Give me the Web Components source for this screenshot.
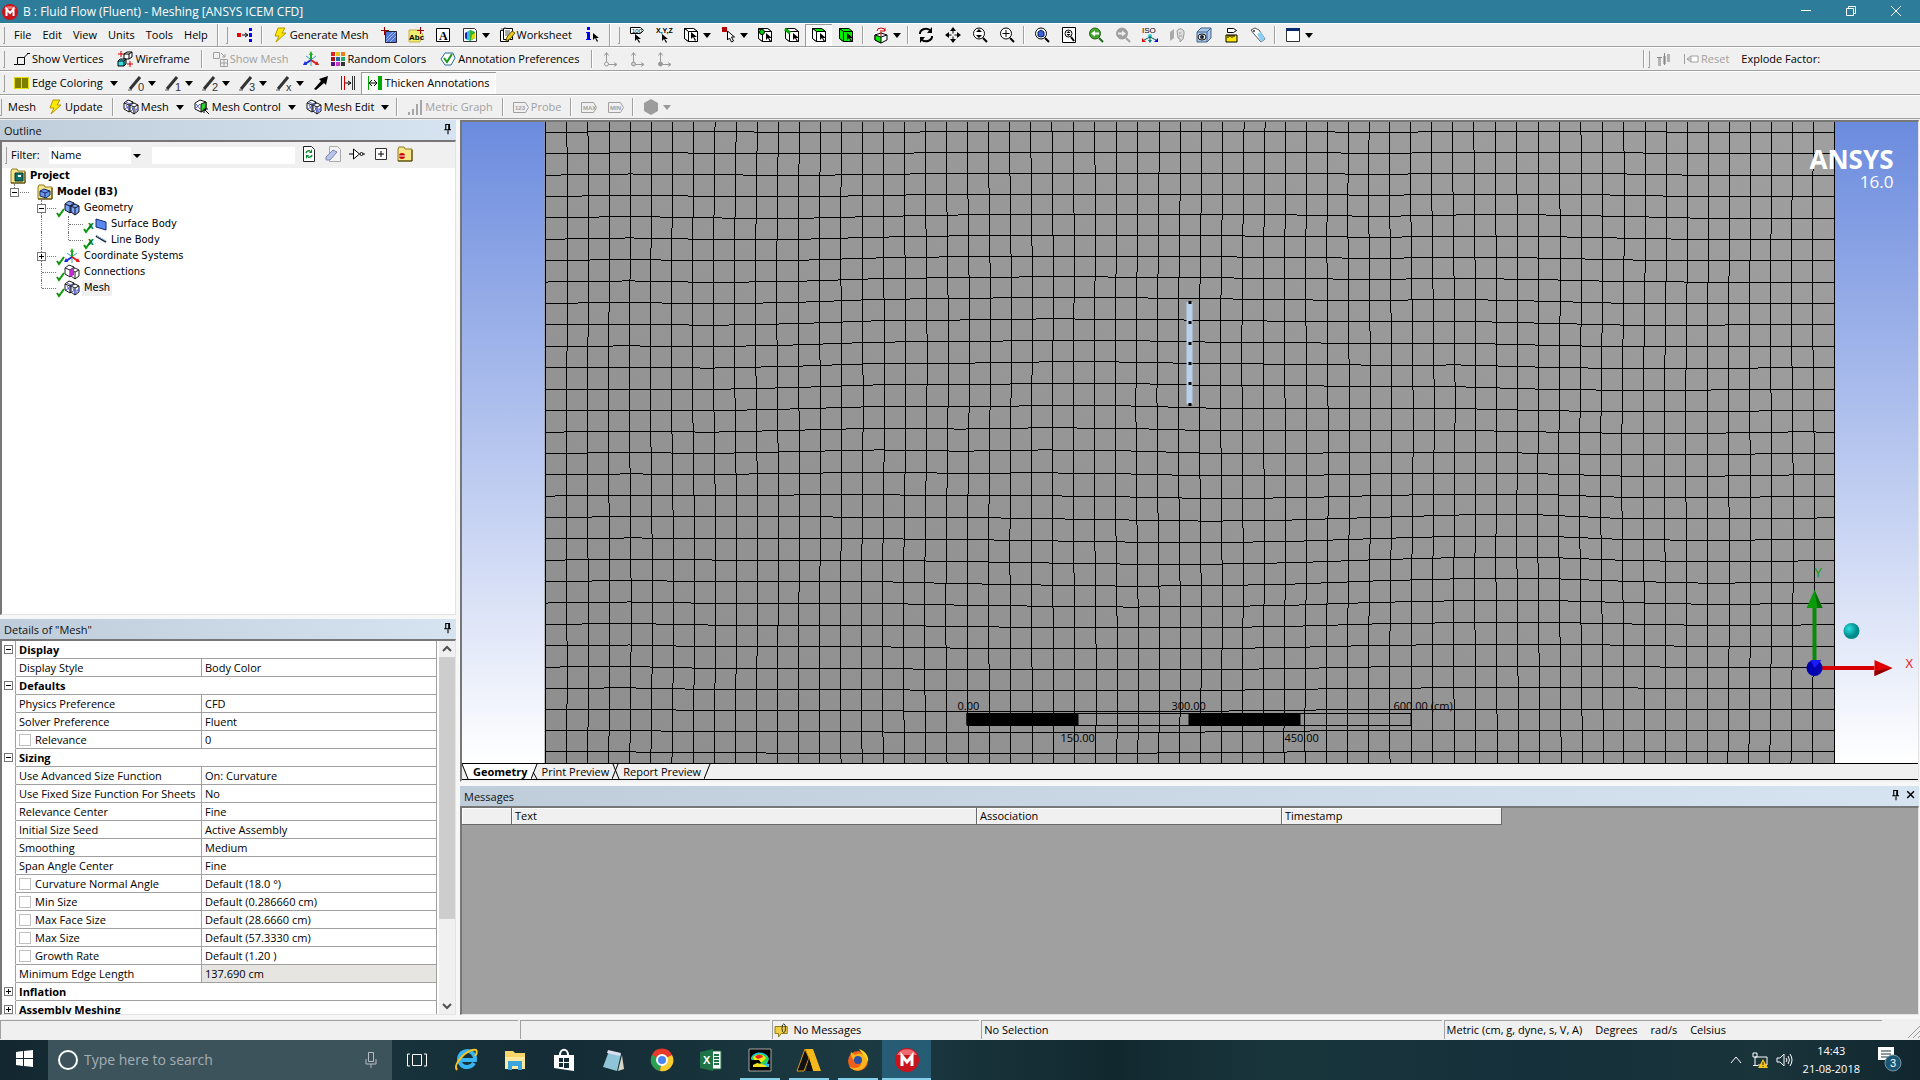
<!DOCTYPE html>
<html lang="en">
<head>
<meta charset="utf-8">
<title>B : Fluid Flow (Fluent) - Meshing [ANSYS ICEM CFD]</title>
<style>
    html, body { height: 100%; }
    body {
        margin: 0;
        overflow: hidden;
        font: 11px/16px "Open Sans", "Noto Sans", sans-serif;
        color: #000;
        background: #f7f7f7;
    }
</style>
</head>
<body>
<mesh-app></mesh-app>

<script>
// ---------- icons, all drawn on a 16x16 grid ----------
const cursor = (x, y, c = '#000') => `<path d="M${x} ${y}v7l2-2 2 4 1-1-2-3h3z" fill="${c}"/>`;
const box = (top, front, side) => `<g stroke="#000" stroke-linejoin="round"><path d="M1.5 1.5h9l4 3v10h-9l-4-3z" fill="#fff"/><path d="M1.5 1.5h9l4 3h-9z" fill="${top}"/><path d="M5.5 4.5h9v10h-9z" fill="${front}"/><path d="M1.5 1.5l4 3v10l-4-3z" fill="${side}"/></g>`;
const cubes = (fill, line) => `<g fill="${fill}" stroke="${line}" stroke-width="1"><path d="M1 4l4-3 5 2v7l-4 3-5-3z"/><path d="M1 4l5 2 4-3M6 6v7"/><path d="M7 6l4-2 4 2v6l-4 3-4-3z"/><path d="M7 6l4 2 4-2M11 8v7"/></g>`;
const meshLines = '<path d="M3 3l6 3M3 6l3 5M2 10l4-3M9 8l2 6M8 12l3-3M12 10l3 1M12 13l3-5" stroke="#5a66d8" stroke-width="1" fill="none"/>';
const lens = (inner, c = '#000', fill = '#fff') => `<circle cx="7" cy="6.5" r="5.5" fill="${fill}" stroke="${c}"/><path d="M11 11l4 4" stroke="${c}" stroke-width="2"/>${inner}`;
const diag = ch => `<path d="M2 14L12 2" stroke="#333" stroke-width="3"/><path d="M0 15h4" stroke="#555"/><text x="10" y="16" font-size="11" font-family="Liberation Sans" fill="#333">${ch}</text>`;
const badge = (t, c) => `<path d="M.5 3.5h12l3 5-3 5H.5z" fill="none" stroke="${c}"/><text x="2" y="11" font-size="6" font-weight="700" font-family="Liberation Sans" fill="${c}">${t}</text>`;
const folder = '<path d="M1 3l1-2h5l1 2h7v12H1z" fill="#f6e58b" stroke="#8b7a1c"/><path d="M1 15h14V4" fill="none" stroke="#4a4210"/>';
const axes = (a, b, c) => `<path d="M8 9V2" stroke="${a}" stroke-width="2"/><path d="M8 0l2 4H6z" fill="${a}"/><path d="M8 9l-6 4" stroke="${b}" stroke-width="2"/><path d="M0 14l2-4 2 4z" fill="${b}"/><path d="M8 9l6 4" stroke="${c}" stroke-width="2"/><path d="M16 14l-4 0 2-4z" fill="${c}"/>`;
const grayAxis = extra => `<path d="M4.5 12V2M2.5 4.5l2-3 2 3M5 13.5h9M12 11.5l3 2-3 2" stroke="#999" fill="none"/><circle cx="4.5" cy="13" r="2" fill="${extra}" stroke="#999"/>`;

const ICONS = {
    meshing: '<circle cx="8" cy="8" r="8" fill="#c8141c"/><path d="M2 5a7 6 0 0 1 12 0z" fill="#ee7378"/><path d="M4.5 12V5L8 9l3.5-4v7" fill="none" stroke="#fff" stroke-width="2"/>',
    route: '<rect x="0" y="6" width="4" height="4" fill="#e00"/><path d="M5 8h5M8 6l3 2-3 2" stroke="#000" fill="none"/><path d="M12 1h3v3h-3zM12 6h3v4h-3zM12 12h3v3h-3z" fill="#00f"/>',
    bolt: '<path d="M6 1h7l-3 5h4L4 15l3-6H3z" fill="#ffe800" stroke="#b49a00"/>',
    plane: '<path d="M4.5 4.5h11v11h-11z" fill="#5277d9" stroke="#223"/><path d="M5 12l7-7M5 15L15 5M9 15l6-6" stroke="#9db6f5"/><path d="M3.5 0v8M0 3.5h8" stroke="#900"/>',
    abc: '<path d="M1 3h11l3 5-3 7H1z" fill="#f3ec70" stroke="#c0b540"/><text x="1" y="13" font-size="8" font-weight="700" font-family="Liberation Sans">Abc</text><path d="M12.5 0v7M9 3.5h7" stroke="#900"/>',
    letter: '<path d="M1.5 1.5h13v13h-13z" fill="#fff" stroke="#000"/><text x="4" y="13" font-size="12" font-family="Liberation Serif" font-weight="700">A</text>',
    chart: '<path d="M1.5 1.5h11l2 2v11h-13z" fill="#fff" stroke="#333"/><path d="M3 6l5-3 5 2v6l-5 3-5-2z" fill="#27c4d8"/><path d="M8 3l5 2v6l-5 3z" fill="#37b036"/><path d="M10 8l3-2v5l-4 2z" fill="#e8d40c"/><path d="M3 6l2-1v7l-2-1z" fill="#22c"/>',
    sheet: '<path d="M1.5 3.5h8v11h-8z" fill="#fff" stroke="#000"/><path d="M4.5 1.5h9v11h-9z" fill="#fff" stroke="#000"/><path d="M6 4h5M6 6h5M6 8h5M3 1v3M6 0v2" stroke="#555"/><path d="M7 14l1-4 5-6 3 2-5 6z" fill="#e9cc1b" stroke="#6b5a00"/>',
    info: '<rect x="3" y="0" width="3" height="3" fill="#00f"/><path d="M2 5h4v7h1v1H2v-1h1V6H2z" fill="#00f"/>' + cursor(9, 6),
    tag100: '<path d="M1.5.5h10l3 3-3 3h-10z" fill="#fff" stroke="#000"/><text x="3" y="6" font-size="6" font-family="Liberation Sans">100</text>' + cursor(6, 7),
    xyz: '<text x="0" y="6" font-size="7" font-weight="700" font-family="Liberation Sans">X,Y,Z</text>' + cursor(6, 7),
    cubeSel: box('#fff', '#fff', '#fff') + cursor(8, 5),
    vertexSel: '<rect x="2" y="0" width="5" height="5" fill="#b00000"/><path d="M7.5 4v9l2-2 2 4 2-1-2-4h3z" fill="#fff" stroke="#000"/>',
    cubeV: box('#fff', '#fff', '#fff') + '<circle cx="5" cy="5" r="2.5" fill="#0d0" stroke="#000"/>' + cursor(9, 6),
    cubeE: box('#fff', '#fff', '#fff') + '<path d="M1 2l5 4" stroke="#0a0" stroke-width="3"/>' + cursor(9, 6),
    cubeF: box('#0e0', '#fff', '#fff') + cursor(9, 6),
    cubeB: box('#0e0', '#0e0', '#0e0') + cursor(9, 6),
    rotCube: '<path d="M2 8l6-2 6 2v5l-6 3-6-3z" fill="#fff" stroke="#000"/><path d="M2 8l6 2v6l-6-3z" fill="#0e0" stroke="#000"/><path d="M8 10l6-2" stroke="#000"/><path d="M4 4a4 3 0 0 1 8 0M12 1v3H9M8 3v6" stroke="#c00" fill="none"/>',
    rotate: '<path d="M2 7a6 5 0 0 1 10-4M14 9a6 5 0 0 1-10 4" fill="none" stroke="#000" stroke-width="2"/><path d="M14 0v6H9zM2 16v-6h5z"/>',
    pan: '<path d="M8 2v12M2 8h12" stroke="#000"/><path d="M8 0l3 4H5zM8 16l3-4H5zM0 8l4-3v6zM16 8l-4-3v6z"/><path d="M6.500 6.500h3v3h-3z" fill="#f0f0f0"/>',
    zoom: lens('<path d="M7 2l3 3H4zM7 11l3-3H4z"/>'),
    zoomIn: lens('<path d="M7 3v7M3.5 6.5h7" stroke="#000"/>'),
    zoomBox: lens('<path d="M4 5l3-2 3 2v4l-3 1-3-1z" fill="#3b60d0" stroke="#001a70"/>'),
    fit: '<path d="M1.5.5h13v15h-13z" fill="#fff" stroke="#000"/><circle cx="7.5" cy="6.5" r="3.5" fill="none" stroke="#000"/><path d="M10 10l3 4" stroke="#000" stroke-width="2"/><path d="M7.5 4l2 2h-4zM7.5 9l2-2h-4z"/>',
    zPrev: lens('<path d="M3 6.5l4-3v2h4v2H7v2z" fill="#fff"/>', '#226618', '#43a62a'),
    zNext: lens('<path d="M11 6.5l-4-3v2H3v2h4v2z" fill="#eee"/>', '#a0a0a0', '#a0a0a0'),
    iso: '<text x="0" y="6" font-size="8" font-family="Liberation Sans">ISO</text><circle cx="8" cy="9" r="2" fill="#3cc"/><path d="M8 9v5M8 10l-6 3M8 10l6 3" stroke="#066"/><path d="M0 11v4h4z" fill="#e00"/><path d="M16 11v4h-4z" fill="#00d"/><path d="M6 13h4l-2 3z" fill="#0a7a7a"/>',
    face: '<path d="M1 5l4-3v9l-4 3z" fill="#aaa"/><path d="M8 4c2-4 8-2 7 3l-1 5-3 3v-3l-2-1z" fill="#ddd" stroke="#999"/><path d="M10 6h2M10 9h3" stroke="#999"/>',
    eye: '<path d="M1 5l4-4h10v10l-4 4H1z" fill="#a9c6ea" stroke="#46638c"/><path d="M1 5h10l4-4M11 5v10" fill="none" stroke="#46638c"/><ellipse cx="6" cy="10" rx="4" ry="3" fill="#fff" stroke="#111"/><circle cx="6" cy="10" r="2" fill="#123"/>',
    ruler: '<path d="M4.5 1.5h6l3 2-3 2h-6z" fill="#fff" stroke="#000"/><path d="M3 8h11v7H3z" fill="#ffe600" stroke="#000"/><path d="M5 8v3M7 8v2M9 8v3M11 8v2" stroke="#000"/>',
    tags: '<path d="M1 3l4-2 4 2 6 9-4 3-7-8z" fill="#fff" stroke="#555"/><path d="M7 7l4-2 4 7-4 3z" fill="#8cd0f2"/><circle cx="4" cy="4" r="1" fill="#333"/>',
    window: '<path d="M1.5 1.5h13v13h-13z" fill="#fff" stroke="#333"/><path d="M1 1h14v3H1z" fill="#0a2a70"/>',
    vertices: '<path d="M3.5 6.5h7v7h-7zM9.5 7l4-4M0 13.5h3M13 2.5h3" fill="none" stroke="#000"/>',
    wire: '<g fill="#fff" stroke="#000"><path d="M7 3l3-2h5v5l-3 2H7z"/><path d="M7 3h5v5M12 3l3-2" fill="none"/></g><g fill="#37e0e0" stroke="#000"><path d="M1 10l2-2h6v5l-2 2H1z"/><path d="M1 10h6v5M7 10l2-2" fill="none"/></g><path d="M4 0v6M1 3h6M13 10v6M10 13h6" stroke="#c00"/>',
    showMesh: '<path d="M1.5 1.5h6v6h-6zM8.5 8.5h7v7h-7zM12 8v7M8 12h7M9 2l4 4M13 3v3h-3" stroke="#a0a0a0" fill="none"/>',
    axes: axes('#1fae1f', '#1a2ae0', '#e01a1a') + '<path d="M3 5l4 3M13 5L9 8M8 10v5" stroke="#36a5b8"/>',
    colors: '<path d="M1 1h4v4H1z" fill="#d22"/><path d="M6 1h4v4H6z" fill="#e8c31c"/><path d="M11 1h4v4h-4z" fill="#e87e1c"/><path d="M1 6h4v4H1z" fill="#a11"/><path d="M6 6h4v4H6z" fill="#26a"/><path d="M11 6h4v4h-4z" fill="#2a6"/><path d="M1 11h4v4H1z" fill="#518"/><path d="M6 11h4v4H6z" fill="#c3c"/><path d="M11 11h4v4h-4z" fill="#333"/>',
    annot: '<path d="M1 8l4-6h8l2 5-4 7H5z" fill="#fff" stroke="#2a6a9c"/><path d="M4 7l3 4 5-8" fill="none" stroke="#1a9a1a" stroke-width="2"/>',
    ax1: grayAxis('#f0f0f0'), ax2: grayAxis('#ccc'), ax3: grayAxis('#999'),
    edgeColor: '<path d="M0 2h7v12H0zM8 2h7v12H8z" fill="#7d7d00"/><path d="M.5 2.5h14v11H.5zM7.5 2v12" fill="none" stroke="#e8e000"/>',
    d0: diag('0'), d1: diag('1'), d2: diag('2'), d3: diag('3'), dx: diag('x'),
    bigArrow: '<path d="M15 1L13 10 11 8 3 15 1 14 8 6 6 4z"/>',
    gapArrow: '<path d="M1.5 1v14M4.5 1v14" stroke="#c00"/><path d="M5 8h6M8 6l3 2-3 2" stroke="#000" fill="none"/><path d="M12.5 1v14M14.5 1v14" stroke="#333"/>',
    thicken: '<path d="M1.5 1v14" stroke="#0a0"/><path d="M2 8h8M5 5L2 8l3 3M7 5l3 3-3 3" stroke="#000" fill="none"/><path d="M11 1h4v14h-4z" fill="#0a0"/>',
    mesh: cubes('#fff', '#111') + meshLines,
    meshCtl: '<path d="M1 4l5-3 6 2v7l-5 3-6-3z" fill="#fff" stroke="#111"/><path d="M2 5l4 5M6 5l-4 4" stroke="#5a66d8"/><path d="M7 5l5-2v7l-5 3z" fill="#2bd02b" stroke="#111"/><path d="M15 15l-5-5M10 14v-4h4" stroke="#000" fill="none"/>',
    graph: '<path d="M1 13h2v3H1zM5 10h2v6H5zM9 5h2v11H9zM13 1h2v15h-2z" fill="#a6a6a6"/>',
    probe: badge('123', '#a0a0a0'), max: badge('MAX', '#a0a0a0'), min: badge('MIN', '#a0a0a0'),
    hex: '<path d="M8 0l7 4v8l-7 4-7-4V4z" fill="#9c9c9c"/>',
    explode: '<path d="M2 7h3v8H2zM7 5h3v8H7zM11 3h3v8h-3z" fill="#b4b4b4"/><path d="M1 6.5h5M8.5 2v12" stroke="#888"/>',
    reset: '<path d="M1.5 3v10M4 8h11M8 5L4 8l4 3" stroke="#a0a0a0" fill="none"/><path d="M8 5h7v6H8z" fill="#fff" stroke="#a0a0a0"/>',
    refresh: '<path d="M2.5.5h8l3 3v12h-11z" fill="#fff" stroke="#222"/><path d="M5 7a3 3 0 0 1 4-2M11 9a3 3 0 0 1-4 2" fill="none" stroke="#0a8a2a" stroke-width="1.500"/><path d="M11 3v4H8zM5 13V9h3z" fill="#0a8a2a"/>',
    eraser: '<path d="M4.5.5h8l3 3v12h-11z" fill="#f3f3f3" stroke="#aaa"/><path d="M1 11l7-7 4 2-7 8-4 0z" fill="#b9c3e6" stroke="#7c87b8"/>',
    gate: '<path d="M0 8h4M4.5 3v10l6-5zM14 8h2" fill="#fff" stroke="#000"/><circle cx="12.5" cy="8" r="1.5" fill="#fff" stroke="#000"/>',
    plusBox: '<path d="M2.5 2.5h11v11h-11z" fill="#fff" stroke="#333"/><path d="M5 8h6M8 5v6" stroke="#000"/>',
    folderRed: folder + '<circle cx="5" cy="10" r="3" fill="#c00"/><path d="M2 10h6" stroke="#fff"/>',
    project: folder + '<path d="M5 5h8v8H5z" fill="#0c7468" stroke="#033"/><path d="M8 7h3v2H8z" fill="#fff"/>',
    model: folder + '<path d="M3 7l4-2 6 2v4l-4 3-6-2z" fill="#6e98ee" stroke="#112a6e"/><path d="M3 7l5 2 5-2M8 9v4" stroke="#112a6e" fill="none"/>',
    geometry: cubes('#7aa4f4', '#112'),
    surface: '<path d="M2 3l10 3v8L2 11z" fill="#5a8af0" stroke="#112a6e"/>',
    line: '<path d="M2 4l10 6" stroke="#123" stroke-width="2"/><path d="M3 4l9 5" stroke="#8fb4e8"/>',
    connections: cubes('#fff', '#222') + '<path d="M6 6l4-2v7l-4 2z" fill="#c22bd0"/>',
    pin: '<path d="M5 2h5v7H5zM9 2v7M3 9h9M8 10v5" stroke="#000" stroke-width="1.500" fill="none"/>',
    close: '<path d="M3 3l9 9M12 3l-9 9" stroke="#000" stroke-width="2"/>',
    note: '<path d="M0 4h14v8H7l-3 4v-4H0z" fill="#f0cf45" stroke="#8a7010"/><ellipse cx="10" cy="6" rx="2" ry="5" fill="none" stroke="#222"/>',
    chevUp: '<path d="M3 11l5-6 5 6" stroke="#fff" fill="none"/>',
    net: '<path d="M3 5h12v8H6M1 1h4v4H1zM3 5v8M1 13.5h5" stroke="#fff" fill="none"/><path d="M11 7l5 9H6z" fill="#f8c514"/><path d="M11 10v3M11 14v1" stroke="#222"/>',
    vol: '<path d="M1 6h3l4-4v12l-4-4H1zM10 6q2 2 0 4M12 4q3 4 0 8M14 2q4 6 0 12" stroke="#fff" fill="none"/>',
    check: '<path d="M1 5l2 3 5-7" fill="none" stroke="#0a9a0a" stroke-width="2"/>',
};

// task bar pictures, 24x24
const TASKS = {
    view: '<path d="M7.5 6.5h9v11h-9zM5 6H2.5v12H5M19 6h2.5v12H19" fill="none" stroke="#fff"/>',
    ie: '<path d="M20 15a8 8 0 1 1 1-3H6" fill="none" stroke="#38b5f0" stroke-width="4"/><path d="M3 22C-2 16 14 0 22 2c2 2 0 5-1 6" fill="none" stroke="#f7c325" stroke-width="2"/>',
    files: '<path d="M2 3h8l2 2h10v15H2z" fill="#f9d66a"/><path d="M2 9h20v12H2z" fill="#fde9a0"/><path d="M5 13h14v9h-4v-4H9v4H5z" fill="#3aa4de"/>',
    store: '<path d="M2 7h20v16l-20-3z" fill="#fff"/><path d="M8 7c0-7 8-7 8 0" fill="none" stroke="#fff" stroke-width="2"/><path d="M7 10h4v4H7zM12 10h5v4h-5zM7 15h4v4H7zM12 15h5v5h-5z" fill="#142c36"/>',
    notes: '<path d="M8 3l12 3-4 17-14-4z" fill="#8ec3d8"/><path d="M7 2l13 3-1 3L6 5z" fill="#dde"/><path d="M17 23l4-16 2 14z" fill="#d8d4c6"/>',
    chrome: '<circle cx="12" cy="12" r="11" fill="#e8392b"/><path d="M12 12L2 7a11 11 0 0 0 8 16z" fill="#27a050"/><path d="M12 12l-2 11A11 11 0 0 0 22 7z" fill="#f9cd2e"/><path d="M2 7h20A11 11 0 0 0 2 7z" fill="#e8392b"/><circle cx="12" cy="12" r="5" fill="#4a84f0" stroke="#fff" stroke-width="2"/>',
    excel: '<path d="M13 3h9v18h-9z" fill="#fff" stroke="#1e7446"/><path d="M15 7h5M15 10h5M15 13h5M15 16h5" stroke="#1e7446" stroke-width="2"/><path d="M1 4l13-3v22L1 20z" fill="#1e7446"/><text x="4" y="16" font-size="11" font-weight="700" fill="#fff" font-family="Liberation Sans">X</text>',
    cfd: '<path d="M1 1h22v22H1z" fill="#000" stroke="#aaa"/><path d="M3 10c2-7 16-8 18 1l-2 5h2v3H9l-5-4z" fill="#19c4e8"/><path d="M4 10c2-5 14-6 16 1l-3 5-10 0z" fill="#2fd833"/><path d="M5 10c3-5 11-4 13 0l-4 4H8z" fill="#f5e31e"/><path d="M7 9c2-3 7-3 8 0l-5 2z" fill="#e22"/><path d="M3 12l8 0 2 3-3 2H3z" fill="#000"/><path d="M5 17l4-2 8 2 2 2H5z" fill="#f5e31e"/>',
    ansys: '<path d="M8 1h8l8 22h-8L12 10z" fill="#f5b81c"/><path d="M8 1l4 9-5 13H0z" fill="#111" stroke="#d99a12"/><path d="M12 10l4 13H9l1-5z" fill="#111"/>',
    firefox: '<circle cx="12" cy="13" r="10" fill="#f0601a"/><path d="M5 4l4 3c5-4 13 0 12 7-2 10-14 11-18 4 7 5 14 0 12-6-2-3-6-2-7 0C5 9 4 7 5 4z" fill="#fbb41c"/><circle cx="12" cy="12" r="4" fill="#2a50a8"/><path d="M13 1c7 2 10 8 9 13-2-5-5-7-9-13z" fill="#fdd42c"/>',
    meshing: '<circle cx="12" cy="12" r="12" fill="#c8141c"/><path d="M2 7a11 10 0 0 1 20 0z" fill="#ee6a70"/><path d="M7 18V8l5 6 5-6v10" fill="none" stroke="#fff" stroke-width="3"/>',
};

const define = (name, template, setup) => customElements.define(name, class extends HTMLElement {
    constructor() {
        super();
        this.attachShadow({ mode: 'open' });
    }
    connectedCallback() {
        this.shadowRoot.innerHTML = typeof template === 'function' ? template(this) : template;
        if (setup) setup(this, this.shadowRoot);
    }
});

define('ui-icon', el => {
    const s = el.getAttribute('size') || 16;
    const big = el.hasAttribute('task');
    return `<svg width="${s}" height="${s}" viewBox="${big ? '0 0 24 24' : '0 0 16 16'}" aria-hidden="true">${(big ? TASKS : ICONS)[el.getAttribute('name')] || ''}</svg>
    <style>:host { display: inline-flex; flex: none; } svg { display: block; overflow: visible; }</style>`;
});

define('title-bar', `
    <ui-icon name="meshing"></ui-icon>
    <span><slot></slot></span>
    <button aria-label="Minimize"><svg width="10" height="10"><path d="M0 4.5h10"/></svg></button>
    <button aria-label="Restore"><svg width="10" height="10"><path d="M.5 2.5h7v7h-7zM2.5 2V.5h7v7H8"/></svg></button>
    <button aria-label="Close"><svg width="10" height="10"><path d="M0 0l10 10M10 0L0 10"/></svg></button>
    <style>
        :host { display: flex; align-items: center; height: 23px; padding: 0 2px; background: #2d7c9a; color: #fff; font-size: 12px; }
        span { flex: 1; padding-left: 5px; }
        button { width: 45px; height: 20px; padding: 0; border: 0; background: none; }
        path { fill: none; stroke: #fff; }
    </style>
`);

define('tool-bar', `
    <slot></slot>
    <style>
        :host { display: flex; align-items: center; height: 22px; padding-top: 1px; background: #f0f0f0; border-bottom: 1px solid #a0a0a0; box-shadow: inset 0 1px #fff; white-space: nowrap; }
        :host([roomy]) { --label-end: 8px; }
    </style>
`);

define('tool-grip', `
    <style>
        :host { display: block; width: 2px; height: 17px; margin: 0 3px; border-right: 1px solid #a0a0a0; border-bottom: 1px solid #a0a0a0; box-sizing: border-box; }
        :host([slim]) { margin: 0; }
    </style>
`);

define('tool-sep', `
    <style>
        :host { display: block; width: 1px; height: 18px; margin: 0 3px; background: #a0a0a0; border-right: 1px solid #fff; }
        :host([band]) { height: 22px; margin: 0 4px; }
    </style>
`);

define('tool-button', el => {
    const icon = el.getAttribute('icon');
    return `
    <button class="${icon && el.textContent ? 'both' : ''}" ${el.hasAttribute('disabled') ? 'disabled' : ''} aria-label="${el.textContent || icon}">
        ${icon ? `<ui-icon name="${icon}"></ui-icon>` : ''}
        ${el.textContent ? '<span><slot></slot></span>' : ''}
        ${el.hasAttribute('drop') ? '<i></i>' : ''}
    </button>
    <style>
        :host { display: flex; }
        button { display: flex; align-items: center; height: 22px; padding: 0 5px 0 6px; border: 0; background: none; font: inherit; color: #000; box-sizing: border-box; }
        button.both { padding-right: var(--label-end, 6px); }
        button:disabled { color: #a0a0a0; }
        ui-icon + span { padding-left: 2px; }
        i { margin: 0 -2px 0 4px; border: 4px solid transparent; border-top: 5px solid #000; border-bottom: 0; }
        span + i { margin-left: 7px; }
        button:disabled i { border-top-color: #999; }
        :host([pressed]) button { background: #f9f9f9; box-shadow: inset 1px 1px #999, inset -1px -1px #fff; }
    </style>`;
});

define('app-toolbars', `
    <tool-bar>
        <tool-grip></tool-grip>
        <tool-button>File</tool-button><tool-button>Edit</tool-button><tool-button>View</tool-button>
        <tool-button>Units</tool-button><tool-button>Tools</tool-button><tool-button>Help</tool-button>
        <tool-sep band></tool-sep><tool-grip></tool-grip>
        <tool-button icon="route"></tool-button><tool-sep></tool-sep>
        <tool-button icon="bolt">Generate Mesh</tool-button>
        <tool-button icon="plane"></tool-button><tool-button icon="abc"></tool-button>
        <tool-button icon="letter"></tool-button><tool-button icon="chart" drop></tool-button>
        <tool-button icon="sheet">Worksheet</tool-button>
        <tool-button icon="info"></tool-button>
        <tool-sep band></tool-sep><tool-grip></tool-grip>
        <tool-button icon="tag100"></tool-button><tool-button icon="xyz"></tool-button>
        <tool-button icon="cubeSel" drop></tool-button><tool-button icon="vertexSel" drop></tool-button>
        <tool-button icon="cubeV"></tool-button><tool-button icon="cubeE"></tool-button>
        <tool-button icon="cubeF" pressed></tool-button><tool-button icon="cubeB"></tool-button>
        <tool-sep></tool-sep>
        <tool-button icon="rotCube" drop></tool-button><tool-sep></tool-sep>
        <tool-button icon="rotate"></tool-button><tool-button icon="pan"></tool-button>
        <tool-button icon="zoom"></tool-button><tool-button icon="zoomIn"></tool-button>
        <tool-sep></tool-sep>
        <tool-button icon="zoomBox"></tool-button><tool-button icon="fit"></tool-button>
        <tool-button icon="zPrev"></tool-button><tool-button icon="zNext" disabled></tool-button>
        <tool-button icon="iso"></tool-button><tool-button icon="face" disabled></tool-button>
        <tool-button icon="eye"></tool-button><tool-button icon="ruler"></tool-button>
        <tool-button icon="tags"></tool-button><tool-sep></tool-sep>
        <tool-button icon="window" drop></tool-button>
    </tool-bar>
    <tool-bar roomy>
        <tool-grip></tool-grip>
        <tool-button icon="vertices">Show Vertices</tool-button>
        <tool-button icon="wire">Wireframe</tool-button><tool-sep></tool-sep>
        <tool-button icon="showMesh" disabled>Show Mesh</tool-button>
        <tool-button icon="axes"></tool-button>
        <tool-button icon="colors">Random Colors</tool-button>
        <tool-button icon="annot">Annotation Preferences</tool-button><tool-sep></tool-sep>
        <tool-button icon="ax1" disabled></tool-button><tool-button icon="ax2" disabled></tool-button><tool-button icon="ax3" disabled></tool-button>
        <div class="explode">
            <tool-sep></tool-sep><tool-grip slim></tool-grip>
            <tool-button icon="explode" disabled></tool-button>
            <tool-button icon="reset" disabled>Reset</tool-button>
            <span>Explode Factor:</span>
        </div>
    </tool-bar>
    <tool-bar>
        <tool-grip></tool-grip>
        <tool-button icon="edgeColor" drop>Edge Coloring</tool-button>
        <tool-button icon="d0" drop></tool-button><tool-button icon="d1" drop></tool-button>
        <tool-button icon="d2" drop></tool-button><tool-button icon="d3" drop></tool-button>
        <tool-button icon="dx" drop></tool-button>
        <tool-button icon="bigArrow"></tool-button><tool-button icon="gapArrow"></tool-button>
        <tool-button icon="thicken" pressed>Thicken Annotations</tool-button>
    </tool-bar>
    <tool-bar>
        <tool-grip slim></tool-grip>
        <tool-button>Mesh</tool-button>
        <tool-button icon="bolt">Update</tool-button><tool-sep></tool-sep>
        <tool-button icon="mesh" drop>Mesh</tool-button>
        <tool-button icon="meshCtl" drop>Mesh Control</tool-button>
        <tool-button icon="mesh" drop>Mesh Edit</tool-button><tool-sep></tool-sep>
        <tool-button icon="graph" disabled>Metric Graph</tool-button><tool-sep></tool-sep>
        <tool-button icon="probe" disabled>Probe</tool-button><tool-sep></tool-sep>
        <tool-button icon="max" disabled></tool-button><tool-button icon="min" disabled></tool-button>
        <tool-sep></tool-sep>
        <tool-button icon="hex" disabled drop></tool-button>
    </tool-bar>
    <style>
        :host { display: block; background: #f0f0f0; padding-bottom: 1px; }
        .explode { display: flex; align-items: center; width: 280px; margin-left: auto; }
        .explode span { padding-left: 4px; }
    </style>
`);

define('dock-panel', el => `
    <header><h2>${el.getAttribute('heading')}</h2>
        <button aria-label="Pin"><ui-icon name="pin" size="12"></ui-icon></button>
        ${el.hasAttribute('closable') ? '<button aria-label="Close"><ui-icon name="close" size="12"></ui-icon></button>' : ''}
    </header>
    <section><slot></slot></section>
    <style>
        :host { display: flex; flex-direction: column; min-height: 0; }
        header { display: flex; align-items: center; height: 19px; flex: none; padding: 1px 1px 0 4px; background: linear-gradient(90deg, #bfcddb, #d6e4f2); }
        h2 { flex: 1; margin: 0; font: inherit; color: #111; }
        button { padding: 0 1px 0 2px; border: 0; background: none; }
        section { flex: 1; display: flex; flex-direction: column; min-height: 0; overflow: hidden; border: 1px solid #e3e3e3; border-top: 2px solid #777; border-left: 2px solid #777; background: #fff; }
    </style>
`);

define('filter-bar', `
    <tool-grip></tool-grip>
    <label for="by">Filter:</label>
    <span><select id="by"><option>Name</option></select><i></i></span>
    <input type="text" aria-label="Filter text">
    <button aria-label="Refresh"><ui-icon name="refresh"></ui-icon></button>
    <button aria-label="Clear"><ui-icon name="eraser"></ui-icon></button>
    <button aria-label="Invert"><ui-icon name="gate"></ui-icon></button>
    <button aria-label="Expand all"><ui-icon name="plusBox"></ui-icon></button>
    <button aria-label="Hide"><ui-icon name="folderRed"></ui-icon></button>
    <style>
        :host { display: flex; align-items: center; flex: none; height: 26px; background: #f0f0f0; }
        label { padding: 0 9px 0 1px; }
        span { position: relative; display: flex; width: 95px; }
        select { appearance: none; width: 100%; height: 17px; padding: 0 2px; border: 0; border-right: 13px solid #f0f0f0; border-radius: 0; background: #fff; font: inherit; color: #000; }
        i { position: absolute; right: 3px; top: 7px; border: 4px solid transparent; border-top-color: #000; border-bottom: 0; }
        input { width: 143px; height: 17px; margin: 0 2px 0 8px; padding: 0; border: 0; box-sizing: border-box; }
        button { padding: 0 4px; border: 0; background: none; }
    </style>
`);

// cells: one letter per 27px indent column. b = blank, i = line, t = branch, l = last branch
define('tree-node', el => {
    const cells = [...(el.getAttribute('cells') || '')];
    const mark = el.getAttribute('box');
    const status = el.getAttribute('status');
    const expander = mark ? `<button aria-label="${mark === '+' ? 'Expand' : 'Collapse'}"><svg width="7" height="7"><path d="M1 3.5h5${mark === '+' ? 'M3.5 1v5' : ''}" stroke="#000"/></svg></button>` : '';
    return `
    ${cells.map((c, n) => `<span class="cell ${c}">${n === cells.length - 1 ? expander : ''}</span>`).join('')}
    <span class="pic">${status ? '<ui-icon class="ok" name="check" size="16"></ui-icon>' : ''}${status === 'x' ? '<b>x</b>' : ''}<ui-icon name="${el.getAttribute('icon')}"></ui-icon></span>
    <span class="text"><slot></slot></span>
    <style>
        :host { display: flex; height: 16px; align-items: center; }
        .cell { position: relative; flex: none; width: 27px; height: 16px; }
        .i::before, .t::before, .l::before { content: ""; position: absolute; left: 4px; top: 0; height: 16px; border-left: 1px dotted #777; }
        .l::before { height: 8px; }
        .t::after, .l::after { content: ""; position: absolute; left: 5px; top: 8px; width: 14px; border-top: 1px dotted #777; }
        .cell button { position: absolute; z-index: 1; left: 0; top: 4px; width: 9px; height: 9px; padding: 0; border: 1px solid #777; background: #fff; }
        .cell svg { display: block; }
        .pic { position: relative; display: flex; }
        :host([leaf]) .pic { padding-left: 3px; }
        .ok { position: absolute; left: -8px; top: 8px; }
        b { position: absolute; left: -3px; top: 2px; color: #0a7a0a; font-size: 10px; }
        .text { margin-left: 2px; padding: 0 2px; }
        :host([leaf]) .text { margin-left: -1px; }
        :host([strong]) .text { font-weight: 700; }
        :host([selected]) .text { background: #f0f0f0; }
    </style>`;
});

define('outline-tree', `
    <tree-node icon="project" strong>Project</tree-node>
    <tree-node cells="l" box="-" icon="model" strong>Model (B3)</tree-node>
    <tree-node cells="bt" box="-" icon="geometry" status="ok">Geometry</tree-node>
    <tree-node cells="bit" icon="surface" status="x" leaf>Surface Body</tree-node>
    <tree-node cells="bil" icon="line" status="x" leaf>Line Body</tree-node>
    <tree-node cells="bt" box="+" icon="axes" status="ok">Coordinate Systems</tree-node>
    <tree-node cells="bt" icon="connections" status="ok">Connections</tree-node>
    <tree-node cells="bl" icon="mesh" status="ok" selected>Mesh</tree-node>
    <style>
        :host { display: block; padding-left: 8px; font-family: "DejaVu Sans Condensed", "Open Sans", sans-serif; }
    </style>
`);

const DETAILS = [
    ['-Display'],
    ['Display Style', 'Body Color'],
    ['-Defaults'],
    ['Physics Preference', 'CFD'],
    ['Solver Preference', 'Fluent'],
    ['*Relevance', '0'],
    ['-Sizing'],
    ['Use Advanced Size Function', 'On: Curvature'],
    ['Use Fixed Size Function For Sheets', 'No'],
    ['Relevance Center', 'Fine'],
    ['Initial Size Seed', 'Active Assembly'],
    ['Smoothing', 'Medium'],
    ['Span Angle Center', 'Fine'],
    ['*Curvature Normal Angle', 'Default (18.0 °)'],
    ['*Min Size', 'Default (0.286660 cm)'],
    ['*Max Face Size', 'Default (28.6660 cm)'],
    ['*Max Size', 'Default (57.3330 cm)'],
    ['*Growth Rate', 'Default (1.20 )'],
    ['Minimum Edge Length', '137.690 cm', 'ro'],
    ['+Inflation'],
    ['+Assembly Meshing'],
];

define('details-grid', () => `
    <div class="view"><table><colgroup><col class="gut"><col class="name"><col></colgroup><tbody>
    ${DETAILS.map(([name, value, ro]) => {
        if (value === undefined) {
            const open = name[0] === '-';
            return `<tr><td class="gut"><button aria-label="${open ? 'Collapse' : 'Expand'}"><svg width="7" height="7"><path d="M1 3.5h5${open ? '' : 'M3.5 1v5'}"/></svg></button></td><th colspan="2">${name.slice(1)}</th></tr>`;
        }
        const label = name[0] === '*' ? `<label><input type="checkbox">${name.slice(1)}</label>` : name;
        return `<tr><td class="gut"></td><td>${label}</td><td class="${ro || ''}">${value}</td></tr>`;
    }).join('')}
    </tbody></table></div>
    <div class="bar"><svg width="16" height="16"><path d="M4 10l4-4 4 4"/></svg><div class="thumb"></div><div class="rest"></div><svg width="16" height="16"><path d="M4 6l4 4 4-4"/></svg></div>
    <style>
        :host { display: flex; flex: 1; min-height: 0; }
        .view { flex: 1; overflow: hidden; }
        table { width: 100%; table-layout: fixed; border-collapse: separate; border-spacing: 0; }
        col.gut { width: 14px; }
        col.name { width: 186px; }
        td, th { height: 17px; padding: 0 0 0 3px; border-bottom: 1px solid #a0a0a0; border-right: 1px solid #a0a0a0; text-align: left; line-height: 16px; white-space: nowrap; }
        td.gut { padding: 0; border-bottom-color: #fff; }
        td.ro { background: #e7e5e2; }
        td button { display: block; width: 9px; height: 9px; margin-left: 2px; padding: 0; border: 1px solid #777; background: #fff; }
        td svg { display: block; }
        td path { stroke: #000; }
        label { display: flex; align-items: center; }
        input { appearance: none; width: 12px; height: 12px; margin: 0 4px 0 0; border: 1px solid #c0c0c0; background: #fff; }
        .bar { display: flex; flex-direction: column; width: 16px; margin-left: 2px; background: #f0f0f0; }
        .bar svg { flex: none; }
        .thumb { flex: 10; background: #cdcdcd; }
        .rest { flex: 3; }
        .bar path { fill: none; stroke: #505050; stroke-width: 2; }
    </style>
`);

// vertical drift of the mesh rows, sampled every 83px across at the listed rows
const DRIFT_ROWS = [0, 4, 8, 12, 15, 18, 21, 25, 29];
const DRIFT = [
    [0, -1, -1, 0, 0, -1, -1, -1, -1, -1, 0, -1, -1, -1, 0, 0, 0],
    [0, -1.5, 0, .5, -1.5, -3, -3, -3, -3, -3, -1.5, -3, -3, -1.5, .5, .5, 0],
    [0, -1, .6, -1, -4, -5, -6, -5.6, -4.7, -3.5, -3, -4, -2.2, 0, 0, 0, 0],
    [.6, .6, .6, -1.3, -4, -4, -5.4, -5.4, -3.3, -3.3, -2, -2, .4, 1.6, 1.2, .4, .6],
    [.6, -.4, .6, -1.3, -3, -1.7, -3, -2, .4, .6, -.8, -.8, .4, 2, 2, .4, .6],
    [.4, -.3, -.3, -.3, .4, .4, 1.7, 3, 4.2, 3, .4, -2, -2, 1.7, 2, 1.3, .4],
    [.6, -.6, .6, .6, .6, 2.6, 4, 5.1, 4.7, 3, -.2, -2.3, -2.7, .2, 2.2, 1.4, .6],
    [.6, 0, 2, 2, 2, 3.2, 3.2, 3.2, 3.2, 2, .4, 0, -.4, 0, 1.2, 1.2, .6],
    [0, 0, .8, 1.2, 1.2, 1.2, 1.2, 1.2, .8, 0, 0, 0, 0, 0, 0, 0, 0],
];
function drift(row, x) {
    let a = 0;
    while (a < DRIFT_ROWS.length - 2 && row > DRIFT_ROWS[a + 1]) a++;
    const t = (row - DRIFT_ROWS[a]) / (DRIFT_ROWS[a + 1] - DRIFT_ROWS[a]);
    const p = Math.min(x / 83, 15.99);
    const i = Math.floor(p), f = p - i;
    const at = r => DRIFT[r][i] * (1 - f) + DRIFT[r][i + 1] * f;
    return at(a) * (1 - t) + at(a + 1) * t;
}
// rows and columns step by whole pixels, like an aliased GL view
function meshPath() {
    let d = '';
    for (let r = 0; r < 30; r++) {
        let last = null;
        for (let x = 0; x <= 1289; x++) {
            const y = Math.round(10 + r * 21.36 + drift(r, x));
            if (y !== last) {
                d += last === null ? `M84 ${y}.5` : `H${84 + x}M${84 + x} ${y}.5`;
                last = y;
            }
        }
        d += 'H1373';
    }
    for (let c = 0; c <= 61; c++) {
        let last = null;
        const edge = c === 0 || c === 61;
        for (let y = 0; y <= 641; y++) {
            const sway = edge ? 0 : .8 * Math.sin(y / 75 + c / 4) + .5 * Math.sin(y / 130 - c / 3);
            const x = Math.round(83 + c * 21.13 + sway);
            if (x !== last) {
                d += last === null ? `M${x}.5 0` : `V${y}M${x}.5 ${y}`;
                last = x;
            }
        }
        d += 'V641';
    }
    return d;
}

define('mesh-viewport', () => `
    <div class="stage">
    <svg viewBox="0 0 1457 641" preserveAspectRatio="xMidYMid slice">
        <defs>
            <linearGradient id="sky" x1="0" y1="0" x2="0" y2="1"><stop offset="0" stop-color="#6b8bde"/><stop offset="1" stop-color="#fff"/></linearGradient>
            <linearGradient id="body" x1="0" y1="1" x2="1" y2="0"><stop offset="0" stop-color="#8e8e8e"/><stop offset="1" stop-color="#9f9f9f"/></linearGradient>
            <radialGradient id="ball" cx=".35" cy=".35"><stop offset="0" stop-color="#2be0e0"/><stop offset="1" stop-color="#008a8a"/></radialGradient>
        </defs>
        <rect width="1457" height="641" fill="url(#sky)"/>
        <rect x="83" width="1290" height="641" fill="url(#body)"/>
        <path d="${meshPath()}" stroke="#000" fill="none" shape-rendering="crispEdges"/>
        <rect x="725" y="180" width="6" height="102" fill="#b8d0ea"/>
        <path d="M727 179h3v3h-3zM727 199h3v3h-3zM727 220h3v3h-3zM727 240h3v3h-3zM727 260h3v3h-3zM727 281h3v3h-3z"/>
        <path d="M505 591h112v12H505zM727 591h112v12H727z"/>
        <path d="M505.5 591.5h444v12h-444z" fill="none" stroke="#000"/>
        <g class="scale"><text x="496" y="588">0.00</text><text x="710" y="588">300.00</text><text x="932" y="588">600.00 (cm)</text><text x="599" y="620">150.00</text><text x="823" y="620">450.00</text></g>
        <path d="M1351 486h4v58h-4z" fill="#0a8a0a"/><path d="M1353 468l8 18h-16z" fill="#0a9a0a"/><path d="M1353 468l8 18h-5z" fill="#066e06"/>
        <path d="M1355 544h58v4h-58z" fill="#d80000"/><path d="M1431 546l-18 8v-16z" fill="#e00000"/><path d="M1431 546l-18 8v-5z" fill="#8e0000"/>
        <circle cx="1353" cy="546" r="8" fill="#0000b0"/><path d="M1353 546l-4-8h11z" fill="#1a1aff"/>
        <circle cx="1390" cy="509" r="8" fill="url(#ball)"/>
        <text x="1353" y="455" font-size="13" fill="#0aa00a">Y</text><text x="1444" y="546" font-size="13" fill="#f01010">X</text>
        <text x="1432" y="47" text-anchor="end" font-size="26" font-weight="700" fill="#fff">ANSYS</text>
        <text x="1432" y="66" text-anchor="end" font-size="17" fill="#fff">16.0</text>
    </svg>
    </div>
    <nav>
        <svg width="8" height="15"><path d="M1 0h7v15H7z" class="fill"/><path d="M0 0l6 15"/></svg>
        <button class="on">Geometry</button>
        <svg width="8" height="15"><path d="M0 0h6L0 15z" class="fill"/><path d="M0 15L6 0M2 8l4 7"/></svg>
        <button>Print Preview</button>
        <svg width="8" height="15"><path d="M0 15L6 0M1 0l6 15"/></svg>
        <button>Report Preview</button>
        <svg width="8" height="15"><path d="M0 15L6 0"/></svg>
    </nav>
    <style>
        :host { display: flex; flex-direction: column; flex: 1; min-height: 0; border: 1px solid #777; border-top-width: 2px; border-left-width: 2px; border-bottom: 2px solid #f0f0f0; border-right-color: #e3e3e3; box-sizing: border-box; }
        .stage { flex: 1; min-height: 0; }
        .stage svg { display: block; width: 100%; height: 100%; }
        text { font-family: "Open Sans", sans-serif; }
        .scale { font-size: 11px; }
        nav { display: flex; flex: none; height: 15px; background: #f0f0f0; border-top: 1px solid #000; border-bottom: 1px solid #000; }
        nav svg { flex: none; }
        nav path { fill: none; stroke: #000; }
        nav .fill { fill: #fff; stroke: none; }
        button { padding: 0 3px; border: 0; background: none; font: inherit; line-height: 15px; color: #000; }
        .on { background: #fff; font-weight: 700; }
    </style>
`);

define('message-list', `
    <table><thead><tr><th class="a"></th><th class="b">Text</th><th class="c">Association</th><th class="d">Timestamp</th></tr></thead></table>
    <style>
        :host { display: block; flex: 1; background: #a0a0a0; }
        table { table-layout: fixed; border-spacing: 0; width: 1040px; }
        th { height: 17px; padding: 0 0 0 3px; box-sizing: border-box; background: #f0f0f0; border-right: 1px solid #696969; border-bottom: 1px solid #696969; box-shadow: inset 1px 1px #fff; font-weight: 400; text-align: left; line-height: 16px; }
        .a { width: 50px; }
        .b { width: 465px; }
        .c { width: 305px; }
        .d { width: 220px; }
    </style>
`);

define('status-bar', `
    <span class="wide"></span>
    <span class="mid"></span>
    <span class="msg"><ui-icon name="note" size="14"></ui-icon>No Messages</span>
    <span class="sel">No Selection</span>
    <span class="units"><i>Metric (cm, g, dyne, s, V, A)</i><i>Degrees</i><i>rad/s</i><i>Celsius</i></span>
    <svg width="12" height="14"><path d="M0 13L12 1M5 13l7-7M10 13l2-2"/></svg>
    <style>
        :host { display: flex; align-items: flex-end; gap: 2px; height: 20px; margin-top: 4px; padding-bottom: 1px; background: #f0f0f0; }
        span { display: flex; align-items: center; gap: 5px; height: 19px; box-sizing: border-box; padding-left: 2px; border-top: 1px solid #a0a0a0; border-left: 1px solid #a0a0a0; }
        .wide { flex: 518; }
        .mid { flex: 248; }
        .msg { flex: 206; }
        .sel { flex: 460; }
        .units { flex: 438; gap: 13px; }
        i { font-style: normal; }
        svg { margin-left: auto; padding-left: 24px; }
        path { stroke: #999; }
    </style>
`);

define('task-bar', () => `
    <button class="start" aria-label="Start"><svg width="17" height="17"><path d="M0 2l7-1v7H0zM8 1l9-1v8H8zM0 9h7v7l-7-1zM8 9h9v8l-9-1z" fill="#fff"/></svg></button>
    <label class="search"><svg width="20" height="20"><circle cx="10" cy="10" r="9" fill="none" stroke="#fff" stroke-width="2"/></svg>
        <input type="text" placeholder="Type here to search" aria-label="Search">
        <svg width="12" height="18"><path d="M3.5 1.5h5v9h-5zM1 8v5h10V8M6 13v4" fill="none" stroke="#b4bec2"/></svg></label>
    ${Object.keys(TASKS).map((t, i) => `<button class="task ${i > 6 ? 'run' : ''} ${i === 10 ? 'now' : ''}" aria-label="${t}"><ui-icon task size="24" name="${t}"></ui-icon></button>`).join('')}
    <div class="tray">
        <ui-icon name="chevUp"></ui-icon><ui-icon name="net"></ui-icon><ui-icon name="vol"></ui-icon>
        <time>14:43<br>21-08-2018</time>
        <button aria-label="Notifications"><svg width="28" height="28"><path d="M2 2h16v13h-3v4l-4-4H2z" fill="#fff"/><path d="M5 6h10M5 9h10M5 12h8" stroke="#16303a"/><circle cx="17" cy="18" r="8" fill="#1c5672" stroke="#7296a4"/><text x="14" y="22" font-size="11" fill="#fff">3</text></svg></button>
    </div>
    <style>
        :host { display: flex; flex: none; height: 40px; color: #fff; background: linear-gradient(90deg, #12262f, #1b3840 12%, #142c35 30%, #1c3a42 45%, #12282f 58%, #19353c 66%, #15303a 80%, #1a343b 92%, #11262e); }
        button { padding: 0; border: 0; background: none; }
        .start { width: 48px; }
        .search { display: flex; align-items: center; width: 344px; padding: 0 15px 0 10px; box-sizing: border-box; background: #3d535b; }
        .search input { flex: 1; min-width: 0; padding: 0 6px; border: 0; background: none; font: 14px/20px "Open Sans", sans-serif; color: #fff; }
        .search input::placeholder { color: #a3afb3; opacity: 1; }
        .task { width: 49px; border-bottom: 2px solid transparent; border-top: 2px solid transparent; display: flex; align-items: center; justify-content: center; box-sizing: border-box; }
        .run { background: linear-gradient(#86cfea, #86cfea) center bottom / 40px 2px no-repeat border-box; }
        .now { background: #265c74; border-bottom-color: #86cfea; }
        .tray { display: flex; align-items: center; gap: 8px; margin-left: auto; padding-right: 16px; }
        time { padding: 0 8px 0 3px; text-align: center; line-height: 18px; }
    </style>
`);

define('mesh-app', `
    <title-bar>B : Fluid Flow (Fluent) - Meshing [ANSYS ICEM CFD]</title-bar>
    <app-toolbars></app-toolbars>
    <main>
        <aside>
            <dock-panel class="outline" heading="Outline"><filter-bar></filter-bar><outline-tree></outline-tree></dock-panel>
            <dock-panel class="details" heading="Details of &quot;Mesh&quot;"><details-grid></details-grid></dock-panel>
        </aside>
        <div class="work">
            <mesh-viewport></mesh-viewport>
            <dock-panel class="messages" heading="Messages" closable><message-list></message-list></dock-panel>
        </div>
    </main>
    <status-bar></status-bar>
    <task-bar></task-bar>
    <style>
        :host { display: flex; flex-direction: column; height: 100vh; }
        main { flex: 1; display: flex; gap: 4px; min-height: 0; }
        aside, .work { display: flex; flex-direction: column; gap: 4px; min-width: 0; min-height: 0; }
        aside { flex: none; width: 456px; }
        .work { flex: 1; padding-right: 1px; }
        .outline { flex: 5 0 0; }
        .details { flex: 4 0 0; }
        .messages { flex: none; height: 229px; }
    </style>
`);
</script>
</body>
</html>
